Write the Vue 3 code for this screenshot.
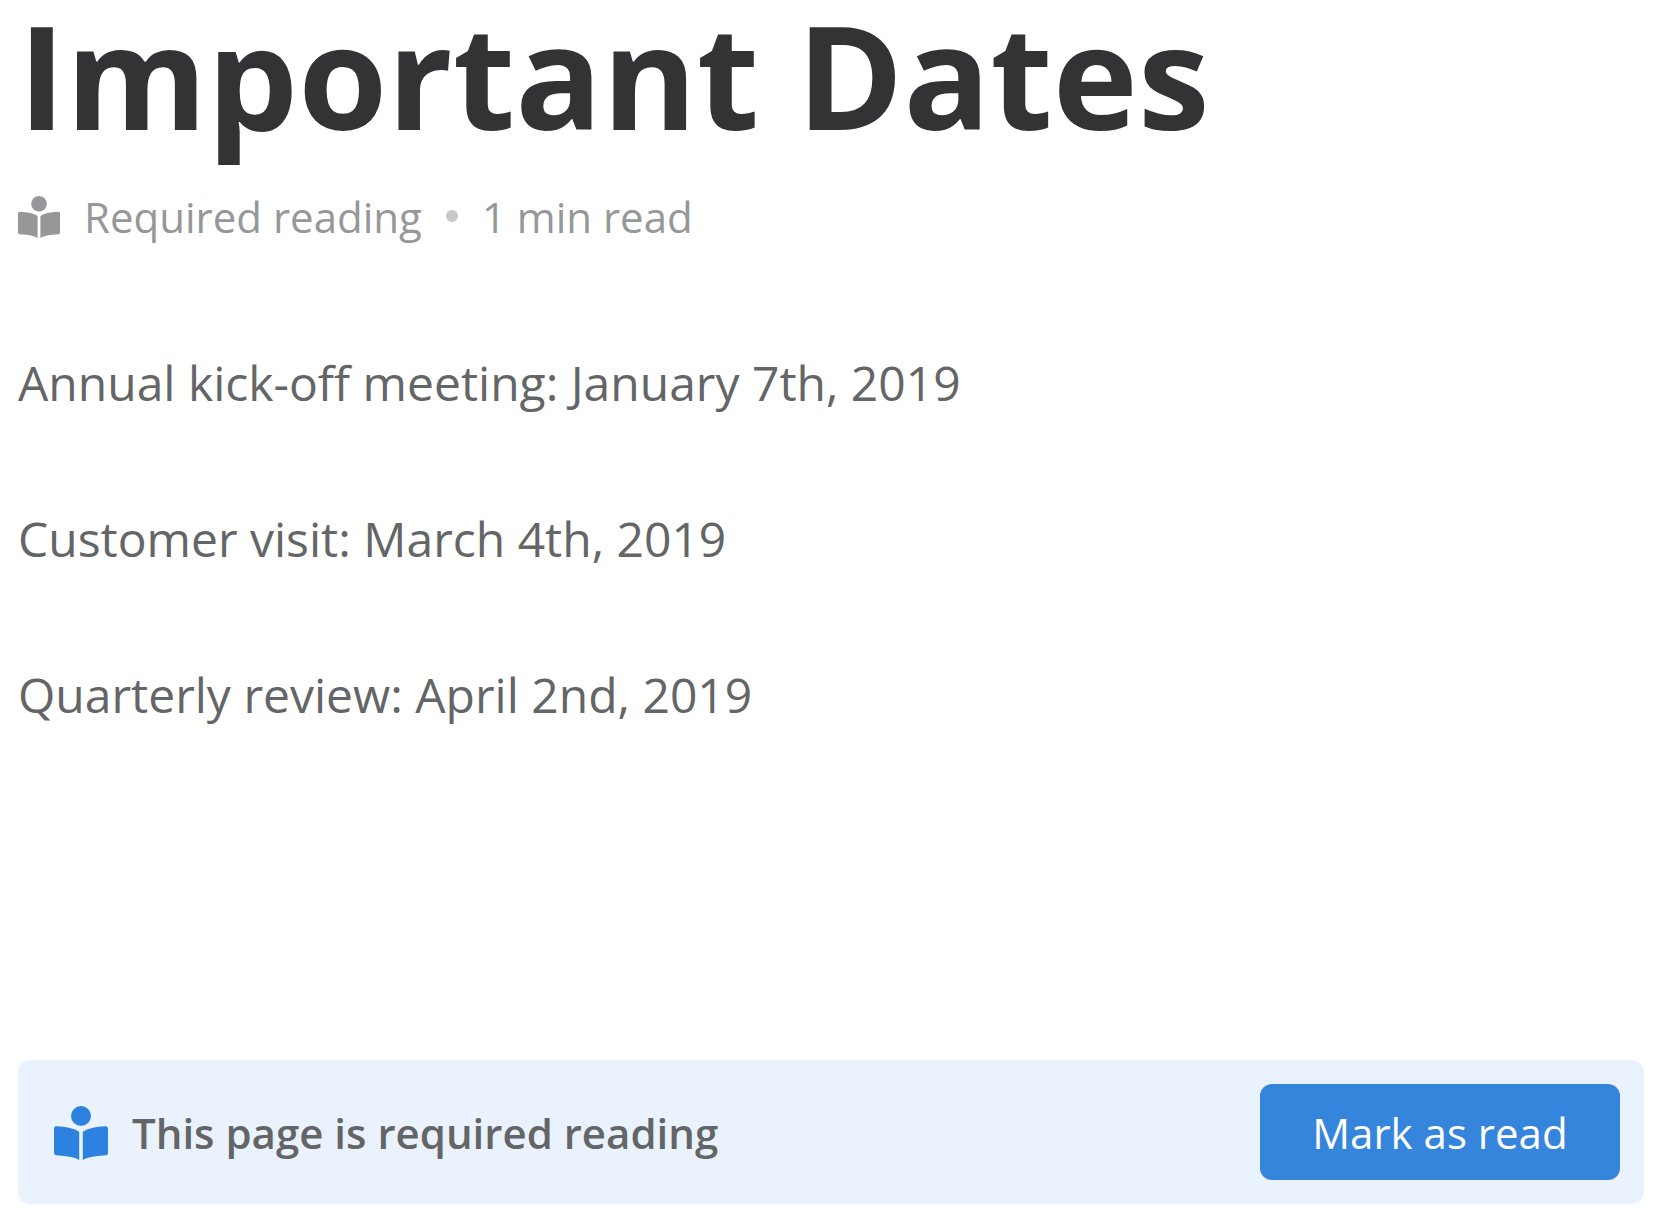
<script setup>
const dates = [
  'Annual kick-off meeting: January 7th, 2019',
  'Customer visit: March 4th, 2019',
  'Quarterly review: April 2nd, 2019',
]
</script>

<template>
  <main class="page">
    <h1>Important Dates</h1>
    <div class="meta">
      <svg class="reader small" viewBox="0 0 54 54" aria-hidden="true">
        <circle cx="27" cy="10" r="10" />
        <path d="M0 22.5Q0 20 2.5 20.2Q18 20.8 25.2 25.8V54Q20 50.2 2 49.2Q0 49 0 47Z" />
        <path d="M54 22.5Q54 20 51.5 20.2Q36 20.8 28.8 25.8V54Q34 50.2 52 49.2Q54 49 54 47Z" />
      </svg>
      <span>Required reading</span>
      <i class="dot"></i>
      <span>1 min read</span>
    </div>
    <article>
      <p v-for="item in dates" :key="item">{{ item }}</p>
    </article>
    <section class="notice">
      <svg class="reader large" viewBox="0 0 54 54" aria-hidden="true">
        <circle cx="27" cy="10" r="10" />
        <path d="M0 22.5Q0 20 2.5 20.2Q18 20.8 25.2 25.8V54Q20 50.2 2 49.2Q0 49 0 47Z" />
        <path d="M54 22.5Q54 20 51.5 20.2Q36 20.8 28.8 25.8V54Q34 50.2 52 49.2Q54 49 54 47Z" />
      </svg>
      <strong>This page is required reading</strong>
      <button type="button">Mark as read</button>
    </section>
  </main>
</template>

<style scoped>
.page {
  padding: 0 18px 20px;
  font-family: "Open Sans", sans-serif;
  color: #646566;
}
h1 {
  margin: 0 0 30px;
  font-size: 144px;
  line-height: 148px;
  font-weight: 700;
  color: #323335;
}
.meta {
  display: flex;
  align-items: center;
  height: 76px;
  font-size: 42px;
  color: #969798;
}
.reader { flex: none; margin: 2px 24px 0 0; fill: currentColor; }
.small { width: 42px; height: 42px; }
.dot { width: 12px; height: 12px; margin: 0 24px; border-radius: 50%; background: #c8c9cb; }
article { display: flow-root; padding-top: 90px; }
p { margin: 0 0 78px; font-size: 48px; line-height: 78px; }
.notice {
  display: flex;
  align-items: center;
  margin-top: 248px;
  padding: 24px 24px 24px 36px;
  border-radius: 12px;
  background: #eaf3fd;
}
.large { width: 54px; height: 54px; color: #2e82df; }
strong { font-size: 42px; font-weight: 600; }
button {
  margin-left: auto;
  width: 360px;
  height: 96px;
  border: 0;
  border-radius: 12px;
  background: #3685dd;
  color: #fff;
  font: 42px "Open Sans", sans-serif;
}
</style>

<style>
body { margin: 0; background: #fff; }
</style>
